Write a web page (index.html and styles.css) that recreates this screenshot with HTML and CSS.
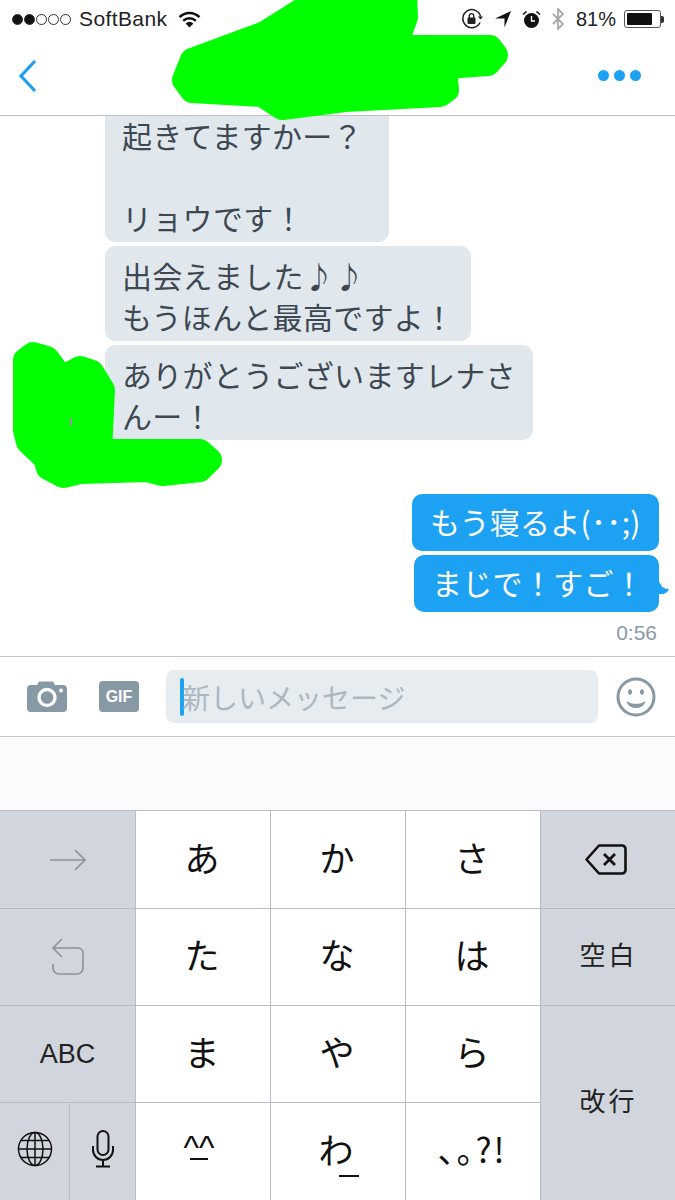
FILE: index.html
```html
<!DOCTYPE html>
<html lang="ja">
<head>
    <meta charset="UTF-8">
    <meta name="viewport" content="width=device-width, initial-scale=1.0">
    <title>メッセージ</title>
    <link rel="stylesheet" href="styles.css">
</head>
<body>
    <div class="phone">
        <!-- Status bar -->
        <div class="status">
            <div class="status-left">
                <div class="signal">
                    <span class="dot on"></span><span class="dot on"></span><span class="dot"></span><span class="dot"></span><span class="dot"></span>
                </div>
                <span class="carrier">SoftBank</span>
                <svg class="wifi" width="23" height="17" viewBox="0 0 23 17">
                    <path d="M1.500 6.200a14 14 0 0 1 20 0" fill="none" stroke="#111" stroke-width="2.400"/>
                    <path d="M5.200 9.800a9 9 0 0 1 12.600 0" fill="none" stroke="#111" stroke-width="2.400"/>
                    <path d="M11.500 16.500l-3.900-4.100a5.500 5.500 0 0 1 7.800 0z" fill="#111"/>
                </svg>
            </div>
            <div class="status-right">
                <svg width="23" height="22" viewBox="0 0 23 22">
                    <path d="M19 14.500a9 9 0 1 1 .6-6" fill="none" stroke="#222" stroke-width="1.500"/>
                    <path d="M16.800 8.500h5.400l-2.700 3z" fill="#222"/>
                    <rect x="6.500" y="9.500" width="8" height="6.500" rx="1" fill="#222"/>
                    <path d="M8.300 10V7.800a2.200 2.200 0 0 1 4.400 0V10" fill="none" stroke="#222" stroke-width="1.400"/>
                </svg>
                <svg width="16" height="17" viewBox="0 0 16 17">
                    <path d="M16 0L9.500 16.500V7.500H0z" fill="#111"/>
                </svg>
                <svg width="19" height="19" viewBox="0 0 19 19">
                    <circle cx="9.500" cy="10.500" r="7.500" fill="#111"/>
                    <path d="M9.500 6v5H13" fill="none" stroke="#fff" stroke-width="1.400"/>
                    <path d="M1 4.500L4.500 1.500M18 4.500L14.500 1.500" stroke="#111" stroke-width="1.600"/>
                </svg>
                <svg width="13" height="22" viewBox="0 0 13 22">
                    <path d="M1 6l10 10-5 5V1l5 5L1 16" fill="none" stroke="#a8a8a8" stroke-width="1.800"/>
                </svg>
                <span class="percent">81%</span>
                <div class="battery"><div class="battery-fill"></div></div>
                <div class="battery-tip"></div>
            </div>
        </div>

        <!-- Nav bar -->
        <div class="nav">
            <svg width="20" height="34" viewBox="0 0 20 34">
                <path d="M17 2L3 17l14 15" fill="none" stroke="#1da1f2" stroke-width="3.200"/>
            </svg>
            <div class="more"><span></span><span></span><span></span></div>
        </div>

        <!-- Messages -->
        <div class="messages">
            <div class="bubble in top">起きてますかー？<br><br>リョウです！</div>
            <div class="bubble in">出会えました♪♪<br>もうほんと最高ですよ！</div>
            <div class="bubble in wide">ありがとうございますレナさんー！</div>
            <div class="bubble out first">もう寝るよ(･･;)</div>
            <div class="bubble out last">まじで！すご！</div>
            <div class="time">0:56</div>
        </div>

        <!-- Input bar -->
        <div class="composer">
            <svg class="camera" width="40" height="31" viewBox="0 0 40 31">
                <path d="M4 4h6l2-3.500h14l2 3.500h8a4 4 0 0 1 4 4v19a4 4 0 0 1-4 4H4a4 4 0 0 1-4-4V8a4 4 0 0 1 4-4z" fill="#8899a6"/>
                <circle cx="20" cy="16.500" r="8" fill="none" stroke="#fff" stroke-width="3.400"/>
                <circle cx="34" cy="9.500" r="2" fill="#fff"/>
            </svg>
            <div class="gif">GIF</div>
            <div class="field">
                <div class="caret"></div>
                <span class="placeholder">新しいメッセージ</span>
            </div>
            <svg class="smile" width="40" height="40" viewBox="0 0 40 40">
                <circle cx="20" cy="20" r="18" fill="none" stroke="#8899a6" stroke-width="3"/>
                <ellipse cx="14" cy="15" rx="2" ry="2.800" fill="#8899a6"/>
                <ellipse cx="26" cy="15" rx="2" ry="2.800" fill="#8899a6"/>
                <path d="M10.500 24c3 2 6 2.800 9.500 2.800s6.500-.8 9.500-2.800c-1 4.500-4.500 7-9.500 7s-8.500-2.500-9.500-7z" fill="#8899a6"/>
            </svg>
        </div>

        <div class="strip"></div>

        <!-- Keyboard -->
        <div class="keyboard">
            <div class="key fn">
                <svg width="38" height="22" viewBox="0 0 38 22">
                    <path d="M1 11h35M26 1l10 10-10 10" fill="none" stroke="#8d9099" stroke-width="1.600"/>
                </svg>
            </div>
            <div class="key">あ</div>
            <div class="key">か</div>
            <div class="key">さ</div>
            <div class="key fn">
                <svg class="backspace" width="42" height="31" viewBox="0 0 42 31">
                    <path d="M14 1.500h23a3.500 3.500 0 0 1 3.500 3.500v21a3.500 3.500 0 0 1-3.500 3.500H14L1.500 15.500z" fill="none" stroke="#111" stroke-width="2.600" stroke-linejoin="round"/>
                    <path d="M19 10l11 11M30 10L19 21" fill="none" stroke="#111" stroke-width="2.800"/>
                </svg>
            </div>

            <div class="key fn">
                <svg width="36" height="38" viewBox="0 0 36 38">
                    <path d="M3 10h25a5 5 0 0 1 5 5v15a6 6 0 0 1-6 6H9a6 6 0 0 1-6-6v-4M12 1L3 10l9 9" fill="none" stroke="#8d9099" stroke-width="1.600"/>
                </svg>
            </div>
            <div class="key">た</div>
            <div class="key">な</div>
            <div class="key">は</div>
            <div class="key fn label">空白</div>

            <div class="key fn abc">ABC</div>
            <div class="key">ま</div>
            <div class="key">や</div>
            <div class="key">ら</div>
            <div class="key fn label enter">改行</div>

            <div class="key fn split">
                <div class="sub globe">
                    <svg width="36" height="36" viewBox="0 0 36 36">
                        <g fill="none" stroke="#111" stroke-width="1.500">
                            <circle cx="18" cy="18" r="16.500"/>
                            <ellipse cx="18" cy="18" rx="8" ry="16.500"/>
                            <path d="M18 1.500v33M1.500 18h33M4 9.500h28M4 26.500h28"/>
                        </g>
                    </svg>
                </div>
                <div class="sub">
                    <svg width="24" height="38" viewBox="0 0 24 38">
                        <rect x="6.500" y="1" width="11" height="24" rx="5.500" fill="none" stroke="#111" stroke-width="2"/>
                        <path d="M2 16v4a10 10 0 0 0 20 0v-4M12 30v6M5 36.500h14" fill="none" stroke="#111" stroke-width="2"/>
                    </svg>
                </div>
            </div>
            <div class="key"><span class="kao">^^</span></div>
            <div class="key"><span class="wa">わ</span></div>
            <div class="key punct">、。?!</div>
        </div>

        <!-- Green scribbles -->
        <svg class="scribble" width="675" height="1200" viewBox="0 0 675 1200">
            <path d="M192 60L265 33L325 -5H405L406 17L395 47H490L496 55L488 64L445 67L447 90L440 95L345 100L282 108L262 95L192 91L184 80Z"/>
            <path d="M25 360L33 354L47 358L62 378L80 368L92 372L103 390L100 451H200L210 460L200 470L163 474L147 470L80 472L63 476L48 468L45 458L28 442L25 430Z"/>
            <rect class="speck" x="70" y="418" width="2" height="8"/>
        </svg>
    </div>
</body>
</html>
```

FILE: styles.css
```css
* {
    box-sizing: border-box;
}
html, body {
    margin: 0;
    padding: 0;
}
body {
    font-family: "Noto Sans CJK JP", "Liberation Sans", sans-serif;
    background: #fff;
}
.phone {
    position: relative;
    width: 675px;
    height: 1200px;
    overflow: hidden;
    display: flex;
    flex-direction: column;
}

/* status bar */
.status {
    height: 38px;
    padding: 0 11px 0 12px;
    display: flex;
    justify-content: space-between;
    align-items: center;
    font-family: "Liberation Sans", sans-serif;
    font-size: 20px;
    color: #222;
}
.status-left, .status-right {
    display: flex;
    align-items: center;
}
.signal {
    display: flex;
    gap: 1px;
    margin-right: 8px;
}
.dot {
    width: 11px;
    height: 11px;
    border-radius: 50%;
    border: 1px solid #333;
}
.dot.on {
    background: #111;
}
.carrier {
    font-size: 21px;
    letter-spacing: 0.4px;
}
.wifi {
    margin-left: 11px;
}
.status-right svg {
    margin-right: 11px;
}
.status-right .percent {
    margin-right: 8px;
}
.battery {
    width: 37px;
    height: 18px;
    border: 1px solid #555;
    border-radius: 3px;
    padding: 2px;
}
.battery-fill {
    width: 81%;
    height: 100%;
    background: #111;
    border-radius: 1px;
}
.battery-tip {
    width: 3px;
    height: 7px;
    background: #333;
    border-radius: 0 2px 2px 0;
}

/* nav */
.nav {
    height: 78px;
    flex: none;
    padding: 0 34px 2px 18px;
    display: flex;
    justify-content: space-between;
    align-items: center;
    border-bottom: 1px solid #bcc0c6;
}
.more {
    display: flex;
    gap: 5px;
}
.more span {
    width: 11px;
    height: 11px;
    border-radius: 50%;
    background: #1da1f2;
}

/* messages */
.messages {
    height: 540px;
    flex: none;
    overflow: hidden;
    display: flex;
    flex-direction: column;
    justify-content: flex-end;
    align-items: flex-start;
    padding: 0 16px 10px 105px;
    font-size: 30px;
    letter-spacing: 0.3px;
    line-height: 41px;
}
.bubble {
    flex: none;
    padding: 9px 17px 4px;
    border-radius: 10px;
    margin-bottom: 4px;
}
.bubble.in {
    background: #e1e8ed;
    color: #3d4853;
}
.bubble.top {
    width: 284px;
}
.bubble.wide {
    width: 428px;
    padding-right: 14px;
    margin-bottom: 54px;
}
.bubble.out {
    position: relative;
    background: #1da1f2;
    color: #fff;
    align-self: flex-end;
    height: 57px;
    padding: 7px 0 7px 18px;
    white-space: nowrap;
}
.bubble.first {
    width: 247px;
}
.bubble.last {
    width: 245px;
}
.bubble.last::after {
    content: "";
    position: absolute;
    right: -10px;
    bottom: 18px;
    width: 11px;
    height: 14px;
    background: #1da1f2;
    clip-path: polygon(0 0, 20% 25%, 40% 50%, 70% 62%, 100% 62%, 85% 85%, 50% 100%, 0 100%);
}
.time {
    align-self: flex-end;
    margin-top: 2px;
    margin-right: 2px;
    font-family: "Liberation Sans", sans-serif;
    font-size: 21px;
    letter-spacing: 0;
    line-height: 30px;
    color: #8899a6;
    margin-bottom: -2px;
}

/* composer */
.composer {
    height: 81px;
    flex: none;
    display: flex;
    align-items: center;
    padding: 0 18px 0 27px;
    border-top: 1px solid #c4c7cc;
    border-bottom: 1px solid #c4c7cc;
}
.gif {
    width: 40px;
    height: 31px;
    margin-left: 32px;
    border-radius: 4px;
    background: #8899a6;
    color: #fff;
    font-family: "Liberation Sans", sans-serif;
    font-size: 16px;
    font-weight: bold;
    line-height: 31px;
    text-align: center;
}
.field {
    width: 432px;
    height: 53px;
    margin-left: 27px;
    background: #e6ecf0;
    border-radius: 8px;
    display: flex;
    align-items: center;
    padding-left: 14px;
}
.caret {
    width: 4px;
    height: 38px;
    background: #1da1f2;
    border-radius: 2px;
    flex: none;
}
.placeholder {
    color: #aab8c2;
    font-size: 28px;
    line-height: 38px;
    margin-left: -2px;
}
.smile {
    margin-left: 18px;
}
.strip {
    height: 73px;
    flex: none;
    background: #fbfbfd;
}

/* keyboard */
.keyboard {
    flex: 1;
    display: grid;
    grid-template-columns: 135px 134px 134px 134px 135px;
    grid-template-rows: 97px 96px 96px 97px;
    gap: 1px;
    background: #b9bcc5;
    border-top: 1px solid #b9bcc5;
}
.key {
    display: flex;
    align-items: center;
    justify-content: center;
    background: #fff;
    color: #111;
    font-size: 35px;
    padding: 0 2px 7px 0;
}
.key.fn {
    background: #d1d5de;
    padding: 0;
}
.backspace {
    margin-right: 5px;
}
.key.label {
    font-size: 26px;
    letter-spacing: 3px;
    color: #222;
    padding-bottom: 7px;
}
.key.abc {
    font-family: "Liberation Sans", sans-serif;
    font-size: 27px;
    color: #222;
}
.key.enter {
    grid-column: 5;
    grid-row: 3 / span 2;
}
.key.split {
    padding: 0;
    gap: 1px;
    background: #b9bcc5;
    align-items: stretch;
}
.sub {
    flex: 1;
    display: flex;
    align-items: center;
    justify-content: center;
    background: #d1d5de;
    padding-bottom: 5px;
}
.sub.globe {
    flex: none;
    width: 69px;
}
.kao {
    position: relative;
    margin-right: 6px;
    font-family: "Liberation Sans", sans-serif;
    font-size: 33px;
    line-height: 30px;
}
.kao::after {
    content: "";
    position: absolute;
    left: 6px;
    right: 6px;
    bottom: 3px;
    height: 2px;
    background: #111;
}
.wa {
    position: relative;
    margin-right: 2px;
}
.wa::after {
    content: "";
    position: absolute;
    left: 21px;
    right: -5px;
    bottom: -3px;
    height: 2px;
    background: #111;
}
.punct {
    font-feature-settings: "halt";
    font-size: 34px;
    letter-spacing: 2px;
}

/* green scribbles over the names */
.scribble {
    position: absolute;
    left: 0;
    top: 0;
    pointer-events: none;
}
.scribble path {
    fill: #00ff00;
    stroke: #00ff00;
    stroke-width: 24;
    stroke-linejoin: round;
}
.speck {
    fill: #8aa08a;
}
```
